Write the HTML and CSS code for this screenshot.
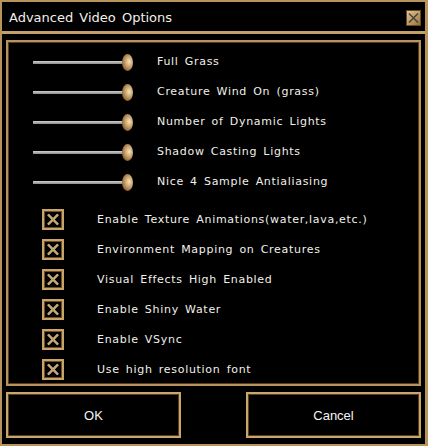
FILE: index.html
```html
<!DOCTYPE html>
<html lang="en">
<head>
    <meta charset="UTF-8">
    <title>Advanced Video Options</title>
    <link rel="stylesheet" href="styles.css">
</head>
<body>
    <div class="window">
        <div class="titlebar">
            <span class="title">Advanced Video Options</span>
            <span class="close">
                <svg width="15" height="16" viewBox="0 0 15 16">
                    <path d="M3 3.5 L12 12.5 M12 3.5 L3 12.5" stroke="#4a4440" stroke-width="1.6"/>
                </svg>
            </span>
        </div>

        <div class="panel">
            <div class="slider-row">
                <div class="slider"><div class="track"></div><div class="knob"></div></div>
                <span class="label">Full Grass</span>
            </div>
            <div class="slider-row">
                <div class="slider"><div class="track"></div><div class="knob"></div></div>
                <span class="label">Creature Wind On (grass)</span>
            </div>
            <div class="slider-row">
                <div class="slider"><div class="track"></div><div class="knob"></div></div>
                <span class="label">Number of Dynamic Lights</span>
            </div>
            <div class="slider-row">
                <div class="slider"><div class="track"></div><div class="knob"></div></div>
                <span class="label">Shadow Casting Lights</span>
            </div>
            <div class="slider-row">
                <div class="slider"><div class="track"></div><div class="knob"></div></div>
                <span class="label">Nice 4 Sample Antialiasing</span>
            </div>

            <div class="checks">
                <div class="check-row"><span class="box"></span><span class="label">Enable Texture Animations(water,lava,etc.)</span></div>
                <div class="check-row"><span class="box"></span><span class="label">Environment Mapping on Creatures</span></div>
                <div class="check-row"><span class="box"></span><span class="label">Visual Effects High Enabled</span></div>
                <div class="check-row"><span class="box"></span><span class="label">Enable Shiny Water</span></div>
                <div class="check-row"><span class="box"></span><span class="label">Enable VSync</span></div>
                <div class="check-row"><span class="box"></span><span class="label">Use high resolution font</span></div>
            </div>
        </div>

        <div class="buttons">
            <button class="btn">OK</button>
            <button class="btn">Cancel</button>
        </div>
    </div>

    <script>
        // every checkbox gets the same drawn X
        let mark = '<svg width="22" height="21" viewBox="0 0 22 21">' +
            '<rect x="1" y="1" width="20" height="19" fill="none" stroke="#c8a468" stroke-width="2"/>' +
            '<rect x="2.5" y="2.5" width="17" height="16" fill="#000" stroke="#6e4f26" stroke-width="1"/>' +
            '<path d="M6 5.5 L16 15.5 M16 5.5 L6 15.5" stroke="#e6cc98" stroke-width="2.4"/>' +
            '<path d="M6 5.5 L16 15.5 M16 5.5 L6 15.5" stroke="#9a743c" stroke-width="0.8"/>' +
            '</svg>';
        document.querySelectorAll('.box').forEach(b => b.innerHTML = mark);
    </script>
</body>
</html>
```

FILE: styles.css
```css
body {
    margin: 0;
    padding: 0;
    background-color: #000;
    font-family: "DejaVu Sans", Verdana, sans-serif;
    color: #f2f0ea;
}

.window {
    box-sizing: border-box;
    width: 428px;
    height: 446px;
    background-color: #000;
    border: 2px solid #b8945c;
    border-right-width: 3px;
    display: flex;
    flex-direction: column;
}

.titlebar {
    height: 29px;
    border-bottom: 3px solid #c2a066;
    display: flex;
    align-items: center;
    justify-content: space-between;
    padding: 0 4px 0 7px;
}

.title {
    font-size: 13px;
    word-spacing: 2px;
    padding-top: 2px;
}

.close {
    width: 15px;
    height: 16px;
    margin-top: 2px;
    background: linear-gradient(135deg, #e3cc9e, #b8945c 60%, #8e6c3a);
    box-shadow: inset 0 0 0 1px #6b4a22;
}

.close svg {
    display: block;
}

.panel {
    margin: 6px 4px 0 4px;
    height: 346px;
    box-sizing: border-box;
    border: 2px solid #b8945c;
    box-shadow: inset 0 0 0 1px #5a3e1c;
    padding-top: 6px;
}

.slider-row {
    height: 30px;
    display: flex;
    align-items: center;
}

.slider {
    position: relative;
    width: 100px;
    height: 18px;
    margin-left: 25px;
}

.track {
    position: absolute;
    left: 0;
    top: 7px;
    width: 92px;
    height: 3px;
    background: linear-gradient(#d0d0d0, #8c8c8c);
}

.knob {
    position: absolute;
    left: 89px;
    top: 0;
    width: 11px;
    height: 17px;
    border-radius: 50%;
    background: radial-gradient(ellipse at 65% 45%, #f4e4c0 0%, #c8a06a 40%, #8a6232 75%, #4a3014 100%);
}

.label {
    font-size: 11px;
    letter-spacing: 0.7px;
    word-spacing: 2px;
    white-space: nowrap;
}

.slider-row .label {
    margin-left: 24px;
    padding-bottom: 4px;
}

.checks {
    margin-top: 6px;
}

.check-row {
    height: 30px;
    display: flex;
    align-items: center;
}

.box {
    width: 22px;
    height: 21px;
    margin-left: 34px;
}

.box svg {
    display: block;
}

.check-row .label {
    margin-left: 33px;
}

.buttons {
    display: flex;
    justify-content: space-between;
    padding: 0 4px;
    margin-top: 6px;
}

.btn {
    width: 175px;
    height: 46px;
    background-color: #000;
    color: #f4f4f4;
    border: 2px solid #c8a66c;
    box-shadow: inset 0 0 0 1px #5a3e1c;
    font-family: "Liberation Sans", Arial, sans-serif;
    font-size: 13px;
    cursor: pointer;
}
```
